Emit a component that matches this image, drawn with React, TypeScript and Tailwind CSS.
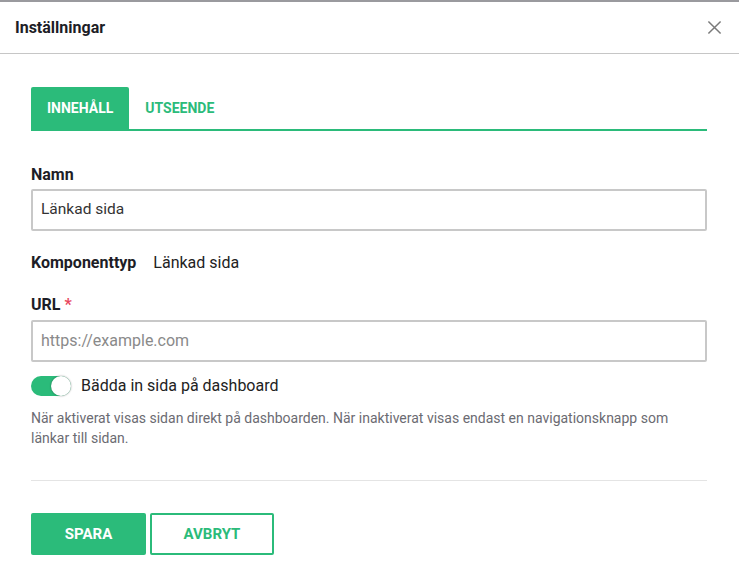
import React, { useState } from "react";

export default function App() {
  const [embed, setEmbed] = useState(true);
  return (
    <div
      className="w-[739px] h-[586px] bg-white overflow-hidden text-[#1d1d26]"
      style={{ fontFamily: "Roboto, 'Liberation Sans', sans-serif" }}
    >
      <div className="h-[2px] bg-[#9a9a9e]" />
      <div className="h-[52px] flex items-center justify-between pl-[15px] pr-[16px] border-b border-[#c6c6c6]">
        <h1 className="text-[16px] font-bold leading-[20px]">Inställningar</h1>
        <button className="w-[18px] h-[18px] flex items-center justify-center text-[#7a7a7a]">
          <svg width="15" height="15" viewBox="0 0 16 16" fill="none" stroke="currentColor" strokeWidth="1.6">
            <path d="M1.5 1.5 L14.5 14.5 M14.5 1.5 L1.5 14.5" />
          </svg>
        </button>
      </div>

      <div className="pl-[31px] pr-[32px] pt-[33px]">
        <div className="flex border-b-2 border-[#2bbb7a]">
          <div className="h-[42px] px-[16px] flex items-center bg-[#2bbb7a] text-white text-[14px] font-bold rounded-t-[2px]">
            INNEHÅLL
          </div>
          <div className="h-[42px] px-[16px] flex items-center text-[#2bbb7a] text-[14px] font-bold">
            UTSEENDE
          </div>
        </div>

        <div className="mt-[34px] text-[16px] font-bold leading-[20px]">Namn</div>
        <div className="mt-[4px] h-[42px] border-2 border-[#c8c8c8] rounded-[2px] flex items-center px-[8px] text-[15.5px] text-[#333]">
          Länkad sida
        </div>

        <div className="mt-[22px] flex items-center text-[16px] leading-[20px]">
          <span className="font-bold">Komponenttyp</span>
          <span className="ml-[17px] text-[#222]">Länkad sida</span>
        </div>

        <div className="mt-[22px] text-[16px] font-bold leading-[20px]">
          URL <span className="text-[#e8485e]">*</span>
        </div>
        <div className="mt-[5px] h-[42px] border-2 border-[#c8c8c8] rounded-[2px] flex items-center px-[8px] text-[16px] text-[#8a8a8a]">
          https://example.com
        </div>

        <div className="mt-[14px] h-[20px] flex items-center">
          <button
            onClick={() => setEmbed(!embed)}
            className={`relative w-[40px] h-[20px] rounded-full ${embed ? "bg-[#2bbb7a]" : "bg-[#c8c8c8]"}`}
          >
            <span
              className={`absolute top-0 w-[20px] h-[20px] rounded-full bg-white shadow-[0_0_2px_rgba(0,0,0,0.45)] ${embed ? "right-0" : "left-0"}`}
            />
          </button>
          <span className="ml-[10px] text-[16px] leading-[20px] text-[#222]">Bädda in sida på dashboard</span>
        </div>

        <p className="mt-[12px] text-[14px] leading-[20px] text-[#6b6b72]">
          När aktiverat visas sidan direkt på dashboarden. När inaktiverat visas endast en navigationsknapp som länkar till sidan.
        </p>

        <div className="mt-[32px] h-px bg-[#e4e4e4]" />

        <div className="mt-[32px] flex gap-[4px]">
          <button className="w-[115px] h-[42px] bg-[#2bbb7a] text-white text-[15px] font-bold rounded-[2px]">
            SPARA
          </button>
          <button className="w-[124px] h-[42px] border-2 border-[#2bbb7a] text-[#2bbb7a] text-[15px] font-bold rounded-[2px]">
            AVBRYT
          </button>
        </div>
      </div>
    </div>
  );
}
